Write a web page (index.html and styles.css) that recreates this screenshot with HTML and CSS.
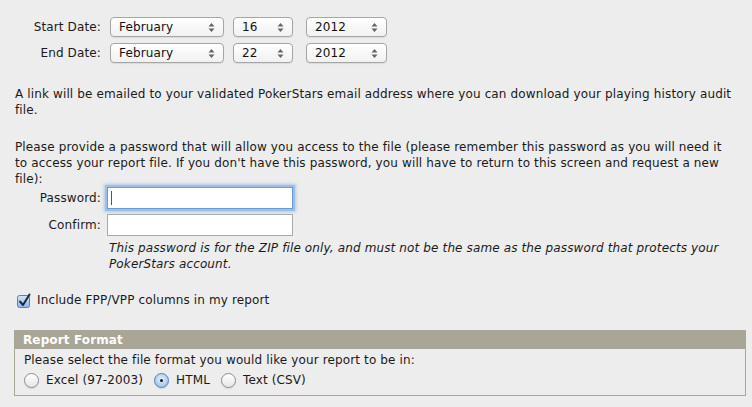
FILE: index.html
```html
<!DOCTYPE html>
<html>
<head>
<meta charset="utf-8">
<link rel="stylesheet" href="styles.css">
</head>
<body>
<div class="page">
  <div class="dates">
    <div class="dlabel">Start Date:</div>
    <div class="sel w-month"><span>February</span><svg class="arr" width="7" height="11" viewBox="0 0 7 11"><path d="M3.5 1 L6.5 4.5 L0.5 4.5 Z M3.5 10 L6.5 6.5 L0.5 6.5 Z" fill="#666"/></svg></div>
    <div class="sel w-day"><span>16</span><svg class="arr" width="7" height="11" viewBox="0 0 7 11"><path d="M3.5 1 L6.5 4.5 L0.5 4.5 Z M3.5 10 L6.5 6.5 L0.5 6.5 Z" fill="#666"/></svg></div>
    <div class="sel w-year"><span>2012</span><svg class="arr" width="7" height="11" viewBox="0 0 7 11"><path d="M3.5 1 L6.5 4.5 L0.5 4.5 Z M3.5 10 L6.5 6.5 L0.5 6.5 Z" fill="#666"/></svg></div>
    <div class="dlabel">End Date:</div>
    <div class="sel w-month"><span>February</span><svg class="arr" width="7" height="11" viewBox="0 0 7 11"><path d="M3.5 1 L6.5 4.5 L0.5 4.5 Z M3.5 10 L6.5 6.5 L0.5 6.5 Z" fill="#666"/></svg></div>
    <div class="sel w-day"><span>22</span><svg class="arr" width="7" height="11" viewBox="0 0 7 11"><path d="M3.5 1 L6.5 4.5 L0.5 4.5 Z M3.5 10 L6.5 6.5 L0.5 6.5 Z" fill="#666"/></svg></div>
    <div class="sel w-year"><span>2012</span><svg class="arr" width="7" height="11" viewBox="0 0 7 11"><path d="M3.5 1 L6.5 4.5 L0.5 4.5 Z M3.5 10 L6.5 6.5 L0.5 6.5 Z" fill="#666"/></svg></div>
  </div>

  <p class="para p1">A link will be emailed to your validated PokerStars email address where you can download your playing history audit file.</p>

  <p class="para p2">Please provide a password that will allow you access to the file (please remember this password as you will need it to access your report file. If you don't have this password, you will have to return to this screen and request a new file):</p>

  <div class="pw">
    <div class="plabel">Password:</div>
    <div class="field focus"><span class="caret"></span></div>
    <div class="plabel">Confirm:</div>
    <div class="field"></div>
    <div></div>
    <p class="note">This password is for the ZIP file only, and must not be the same as the password that protects your PokerStars account.</p>
  </div>

  <div class="check">
    <svg class="cb" width="14" height="15" viewBox="0 0 14 15">
      <defs><linearGradient id="cbg" x1="0" y1="0" x2="0" y2="1"><stop offset="0" stop-color="#d6e6f8"/><stop offset="1" stop-color="#8fb5e6"/></linearGradient></defs>
      <rect x="0.5" y="2.5" width="12" height="12" rx="2" fill="url(#cbg)" stroke="#5a7fb0"/>
      <path d="M3 8.5 L6 12 L12.5 1.5" fill="none" stroke="#1a2a44" stroke-width="2" stroke-linecap="round" stroke-linejoin="round"/>
    </svg>
    <span>Include FPP/VPP columns in my report</span>
  </div>

  <div class="box">
    <div class="boxhead">Report Format</div>
    <div class="boxbody">
      <div>Please select the file format you would like your report to be in:</div>
      <div class="radios">
        <span class="radio"></span><span class="rl">Excel (97-2003)</span>
        <span class="radio on"></span><span class="rl">HTML</span>
        <span class="radio"></span><span class="rl">Text (CSV)</span>
      </div>
    </div>
  </div>
</div>
</body>
</html>
```
FILE: styles.css
```css
html, body {
  margin: 0;
  padding: 0;
  background: #ededed;
}
body {
  font-family: "DejaVu Sans", sans-serif;
  font-size: 12px;
  letter-spacing: 0.13px;
  color: #1a1a1a;
  line-height: 16px;
}
.page {
  padding: 17px 6px 0 15px;
}
.dates {
  display: grid;
  grid-template-columns: 86px auto auto auto;
  justify-content: start;
  column-gap: 9px;
  row-gap: 6px;
}
.dlabel {
  text-align: right;
  line-height: 20px;
}
.sel {
  position: relative;
  height: 18px;
  border: 1px solid #a6a6a6;
  border-radius: 4px;
  background: linear-gradient(#ffffff, #f1f1f1);
  box-shadow: 0 1px 1px rgba(0,0,0,0.08);
  display: flex;
  align-items: center;
  padding-left: 8px;
  color: #111;
}
.sel .arr {
  position: absolute;
  right: 8px;
  top: 4px;
}
.w-month { width: 104px; }
.w-day { width: 50px; }
.w-year { width: 71px; margin-left: 4px; }
.para {
  margin: 0;
  max-width: 722px;
}
.p1 { margin-top: 23px; }
.p2 { margin-top: 21px; }
.pw {
  display: grid;
  grid-template-columns: 86px 186px;
  column-gap: 6px;
  row-gap: 5px;
  justify-content: start;
}
.pw .note {
  grid-column: 2 / span 1;
  width: 640px;
  margin: -1px 0 0 2px;
  font-style: italic;
}
.plabel {
  text-align: right;
  line-height: 22px;
}
.field {
  height: 20px;
  border: 1px solid #a9a9a9;
  background: #fff;
  position: relative;
}
.field.focus {
  border-color: #6d9bd1;
  box-shadow: 0 0 0 2px #9ac0e6, 0 0 3px 3px rgba(120,165,220,0.5);
}
.caret {
  position: absolute;
  left: 3px;
  top: 3px;
  width: 1px;
  height: 14px;
  background: #555;
}
.check {
  display: flex;
  align-items: center;
  gap: 6px;
  margin: 20px 0 0 2px;
}
.box {
  margin: 22px 0 0 -1px;
  border: 1px solid #aaa697;
  width: 730px;
}
.boxhead {
  background: #aaa697;
  color: #fff;
  font-weight: bold;
  padding-left: 8px;
  height: 18px;
  line-height: 18px;
}
.boxbody {
  padding: 3px 8px 7px 9px;
}
.radios {
  display: flex;
  align-items: center;
  margin-top: 4px;
}
.radio {
  width: 15px;
  height: 15px;
  border-radius: 50%;
  border: 1px solid #8e8e8e;
  background: linear-gradient(#ffffff, #e6e6e6);
  box-sizing: border-box;
  margin-right: 7px;
  position: relative;
  box-shadow: 0 1px 1px rgba(0,0,0,0.1);
}
.radio.on {
  background: radial-gradient(circle at 50% 40%, #e4f0fc, #8db6e8);
  border-color: #5a7fb0;
}
.radio.on::after {
  content: "";
  position: absolute;
  left: 5px;
  top: 5px;
  width: 3px;
  height: 3px;
  border-radius: 50%;
  background: #1a1a1a;
}
.rl { margin-right: 11px; }
```
